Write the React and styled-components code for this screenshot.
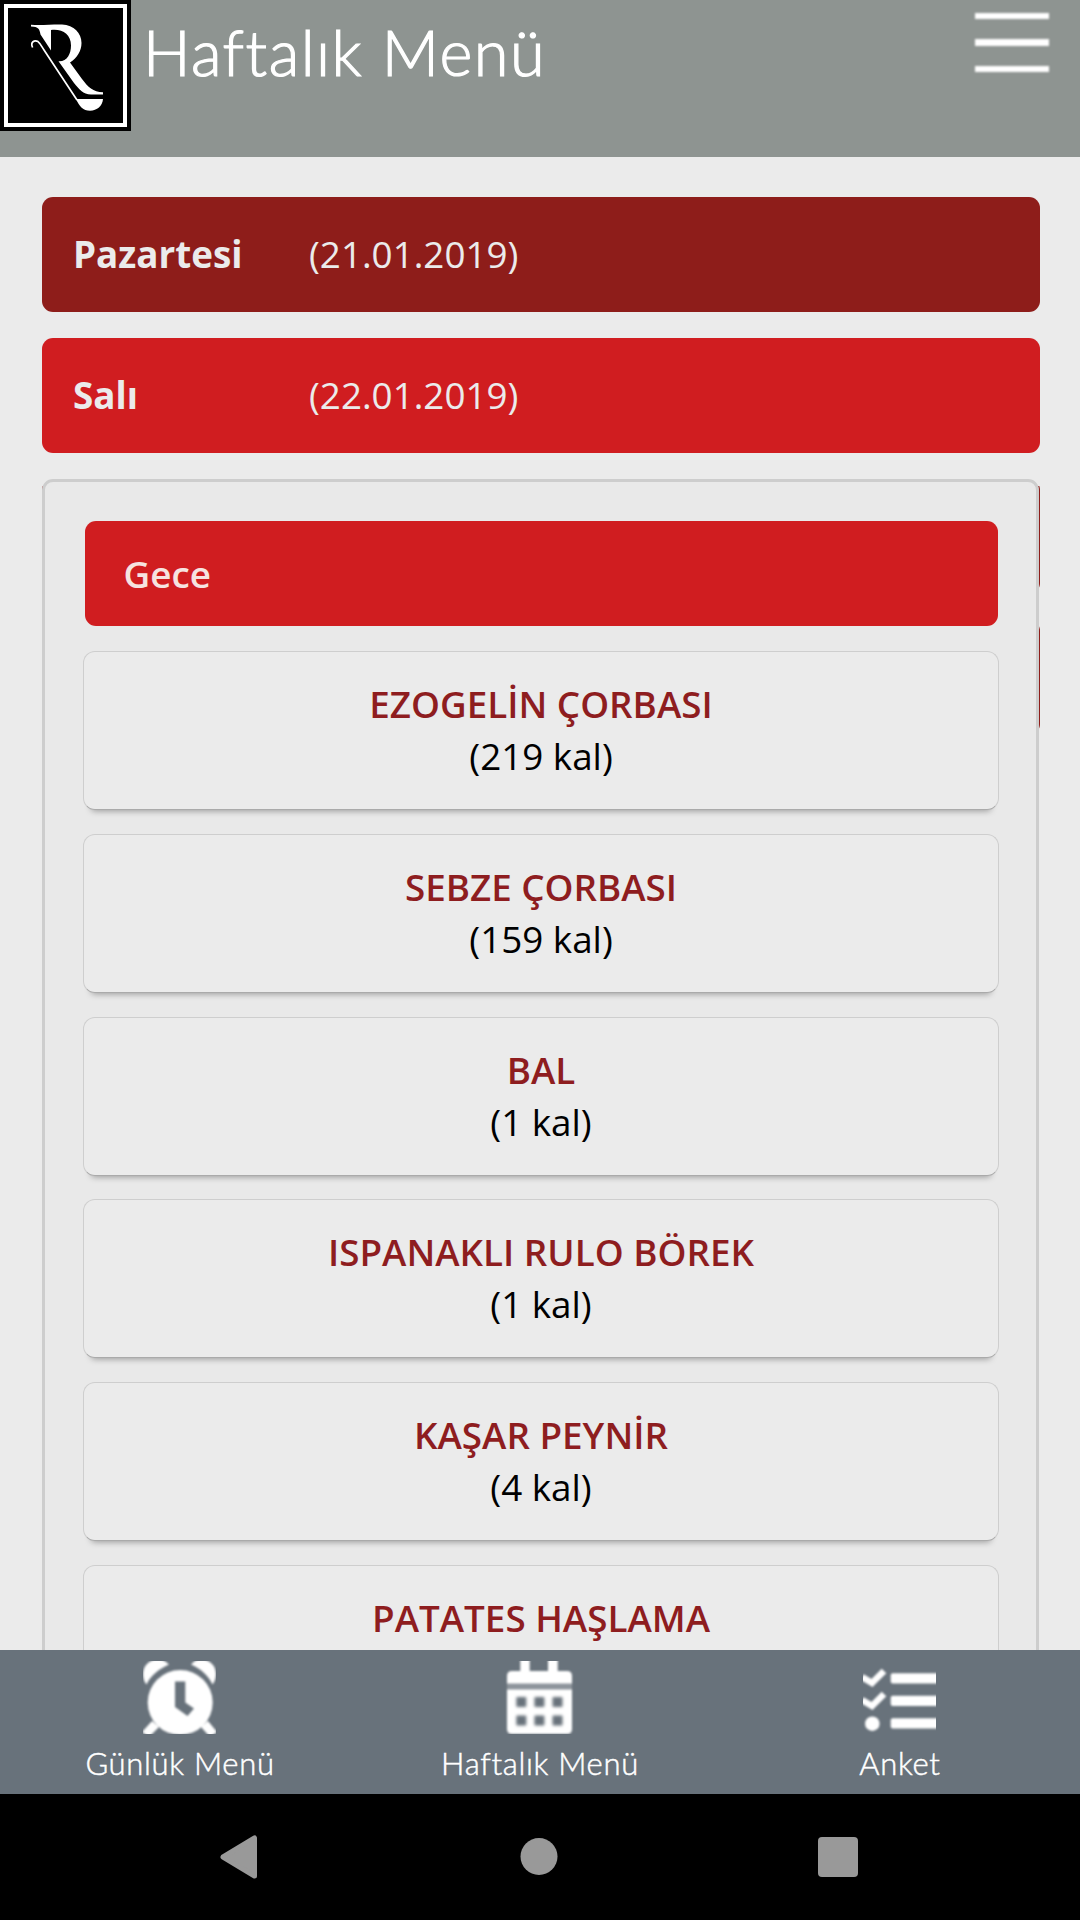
import React, { useState } from 'react'
import styled, { createGlobalStyle } from 'styled-components'

const GlobalStyle = createGlobalStyle`
  * {
    box-sizing: border-box;
  }
  body {
    margin: 0;
    background: #ebebeb;
    font-family: 'Open Sans', sans-serif;
  }
`

const Screen = styled.div`
  display: flex;
  flex-direction: column;
  width: 1080px;
  height: 1920px;
  overflow: hidden;
`

const Header = styled.header`
  display: flex;
  align-items: flex-start;
  flex: 0 0 157px;
  background: #8e9491;
  padding-right: 31px;
  h1 {
    flex: 1;
    margin: 0;
    padding: 14px 0 0 12px;
    font-family: Lato, sans-serif;
    font-weight: 300;
    font-size: 63px;
    line-height: 76px;
    letter-spacing: 1.5px;
    white-space: nowrap;
    color: #fff;
    -webkit-text-stroke: 1.2px #fff;
  }
`

const MenuButton = styled.button`
  display: flex;
  flex-direction: column;
  gap: 20px;
  width: 74px;
  padding: 0;
  margin-top: 13px;
  border: none;
  background: none;
  filter: blur(0.8px);
  span {
    height: 6.3px;
    background: #fff;
  }
`

const Content = styled.main`
  flex: 1;
  min-height: 0;
  overflow: hidden;
  padding: 40px 40px 0 42px;
`

const DayRow = styled.div`
  display: flex;
  align-items: center;
  height: 115px;
  margin-bottom: 26px;
  padding: 0 0 2px 31px;
  border-radius: 11px;
  background: ${({ $active }) => ($active ? '#d01d20' : '#8e1d1a')};
  color: #ebebeb;
  font-size: 36.8px;
  strong {
    width: 236px;
    font-weight: 700;
  }
`

const PanelWrap = styled.div`
  position: relative;
`

// the closed days stay under the open panel, only their right edge is seen
const HiddenDays = styled.div`
  position: absolute;
  inset: 0 0 auto 0;
  clip-path: inset(7px 0 0 0);
  div {
    height: 115px;
    margin-bottom: 26px;
    border-radius: 11px;
    background: #8e1d1a;
  }
`

const Panel = styled.section`
  position: relative;
  width: 997px;
  height: 1300px;
  padding: 39px 37px 0 38px;
  border: 3px solid #cdcdcd;
  border-radius: 11px;
  background: #e9e9e9;
`

const MealTitle = styled.h2`
  margin: 0 1px 25px 1.5px;
  height: 105px;
  padding-left: 39px;
  border-radius: 11px;
  background: #d01d20;
  color: #f6e3e0;
  font-size: 36.8px;
  font-weight: 600;
  line-height: 107px;
`

const FoodCard = styled.div`
  height: 159px;
  margin-bottom: 23.8px;
  padding-top: 26px;
  border: 1.5px solid #cecece;
  border-bottom-color: #aaa;
  border-radius: 12px;
  background: #ebebeb;
  box-shadow: 0 9px 6px -8px rgba(0, 0, 0, 0.35);
  text-align: center;
  font-size: 36.8px;
  line-height: 52px;
  color: #000;
  h3 {
    margin: 0;
    font-size: inherit;
    font-weight: 600;
    color: #8e1d1f;
  }
  p {
    margin: 0;
  }
`

const TabBar = styled.nav`
  display: grid;
  grid-template-columns: repeat(3, 360px);
  flex: 0 0 144px;
  background: #68727b;
`

const Tab = styled.div`
  display: flex;
  flex-direction: column;
  align-items: center;
  padding-top: 11px;
  font-family: Lato, sans-serif;
  font-weight: 300;
  font-size: 31px;
  line-height: 38px;
  letter-spacing: ${({ $spacing }) => $spacing}px;
  color: #fff;
  -webkit-text-stroke: 0.5px #fff;
  svg {
    display: block;
    margin: 0 ${({ $shift }) => $shift}px 10px 0;
    overflow: hidden;
  }
  svg g {
    filter: blur(0.9px);
  }
`

const SystemBar = styled.div`
  flex: 0 0 126px;
  display: flex;
  align-items: center;
  justify-content: space-between;
  padding: 0 222px 1px 220px;
  background: #000;
`

function Logo() {
  return (
    <svg width="131" height="131" viewBox="0 0 131 131">
      <rect width="131" height="131" fill="#000" />
      <rect x="6" y="6" width="119" height="119" fill="none" stroke="#fff" strokeWidth="4" />
      <path
        d="M31 24.8 C42 25.6 51 24.3 62 24.5 C74 25 81.5 33 81.5 43 C81.5 51 77 58 70 62.5 L82 79 C88 87 93 92 103 92.3 V94.5 H91 C83 94.5 79 89 74 83 L58.5 61.2 C67 61.8 71 54 71 45.5 C71 34 62 28.5 51 30 V50.5 L40.5 34.5 C39.5 29 38.5 26.8 31 26.6 Z"
        fill="#fff"
      />
      <path d="M32.6 47.5 C30 42 34.5 39.6 38 41.6 C40.5 43.5 42 47 44 50 L77 100" fill="none" stroke="#fff" strokeWidth="1.7" />
      <path d="M76 99 H103 C102.5 106 97 110.7 90 110.7 C83 110.7 79.5 106.5 76 99 Z" fill="#fff" />
    </svg>
  )
}

function AlarmIcon() {
  return (
    <svg width="73" height="73" viewBox="0 0 73 73">
      <g fill="#fff">
        <path d="M3.5 23.5 C-1 18 -1 9 3 4 C9 -3 19 -4 26 3.5 C16 8 8 14 3.5 23.5 Z" />
        <path d="M69.5 23.5 C74 18 74 9 70 4 C64 -3 54 -4 48 3.5 C58 8 65 14 69.5 23.5 Z" />
        <path d="M-1 71 L9 60 L16 66 L6 76 Z M74 71 L65 60 L58 66 L67 76 Z" />
        <circle cx="37.2" cy="41.5" r="32.5" />
        <path d="M32 20.5 H42.3 V41.5 L51 47.5 L44.5 55 L32 46 Z" fill="#68727b" />
      </g>
    </svg>
  )
}

function CalendarIcon() {
  return (
    <svg width="73" height="73" viewBox="0 0 73 73">
      <g fill="#fff">
        <path d="M17.3 -2 H26.7 V10 H45 V-2 H54.7 V10 H64 Q69 10 69 15 V22.5 H4 V15 Q4 10 9 10 H17.3 Z" />
        <rect x="4" y="22" width="65" height="7" opacity="0.25" />
        <path d="M4 28.5 H69 V68 Q69 73 64 73 H9 Q4 73 4 68 Z" />
        <g fill="#68727b">
          {[13.3, 31.4, 49.5].map(x => (
            <React.Fragment key={x}>
              <rect x={x} y="36" width="10" height="10" rx="1" />
              <rect x={x} y="54.5" width="10" height="10" rx="1" />
            </React.Fragment>
          ))}
        </g>
      </g>
    </svg>
  )
}

function TasksIcon() {
  return (
    <svg width="73" height="73" viewBox="0 0 73 73">
      <g fill="#fff">
        <path d="M-1 16 L9 22 L21 10 M-1 39 L9 45 L21 33" fill="none" stroke="#fff" strokeWidth="6.5" />
        <circle cx="9.3" cy="62.7" r="7.3" />
        <rect x="27.7" y="12.2" width="50" height="10.3" rx="2" />
        <rect x="27.7" y="34.7" width="50" height="10.3" rx="2" />
        <rect x="27.7" y="57.2" width="50" height="10.3" rx="2" />
      </g>
    </svg>
  )
}

const days = [
  { id: 1, name: 'Pazartesi', date: '21.01.2019' },
  { id: 2, name: 'Salı', date: '22.01.2019' },
]

const foods = [
  { id: 1, name: 'EZOGELİN ÇORBASI', kal: 219 },
  { id: 2, name: 'SEBZE ÇORBASI', kal: 159 },
  { id: 3, name: 'BAL', kal: 1 },
  { id: 4, name: 'ISPANAKLI RULO BÖREK', kal: 1 },
  { id: 5, name: 'KAŞAR PEYNİR', kal: 4 },
  { id: 6, name: 'PATATES HAŞLAMA' },
]

export default function App() {
  const [activeDay, setActiveDay] = useState(2)

  return (
    <Screen>
      <GlobalStyle />
      <Header>
        <Logo />
        <h1>Haftalık Menü</h1>
        <MenuButton>
          <span />
          <span />
          <span />
        </MenuButton>
      </Header>

      <Content>
        {days.map(day => (
          <DayRow key={day.id} $active={day.id === activeDay} onClick={() => setActiveDay(day.id)}>
            <strong>{day.name}</strong>
            <span>({day.date})</span>
          </DayRow>
        ))}
        <PanelWrap>
          <HiddenDays>
            <div />
            <div />
          </HiddenDays>
          <Panel>
            <MealTitle>Gece</MealTitle>
            {foods.map(food => (
              <FoodCard key={food.id}>
                <h3>{food.name}</h3>
                {food.kal && <p>({food.kal} kal)</p>}
              </FoodCard>
            ))}
          </Panel>
        </PanelWrap>
      </Content>

      <TabBar>
        <Tab $shift={1} $spacing={0.7}>
          <AlarmIcon />
          Günlük Menü
        </Tab>
        <Tab $shift={2} $spacing={0.7}>
          <CalendarIcon />
          Haftalık Menü
        </Tab>
        <Tab $shift={1} $spacing={0.7}>
          <TasksIcon />
          Anket
        </Tab>
      </TabBar>

      <SystemBar>
        <svg width="37" height="44" viewBox="0 0 37 44">
          <path d="M3 22 L34.5 3 V41 Z" fill="#999" stroke="#999" strokeWidth="5" strokeLinejoin="round" />
        </svg>
        <svg width="41" height="37" viewBox="0 0 41 37">
          <circle cx="22" cy="18.5" r="18.5" fill="#999" />
        </svg>
        <svg width="40" height="40" viewBox="0 0 40 40">
          <rect width="40" height="40" rx="4" fill="#999" />
        </svg>
      </SystemBar>
    </Screen>
  )
}
